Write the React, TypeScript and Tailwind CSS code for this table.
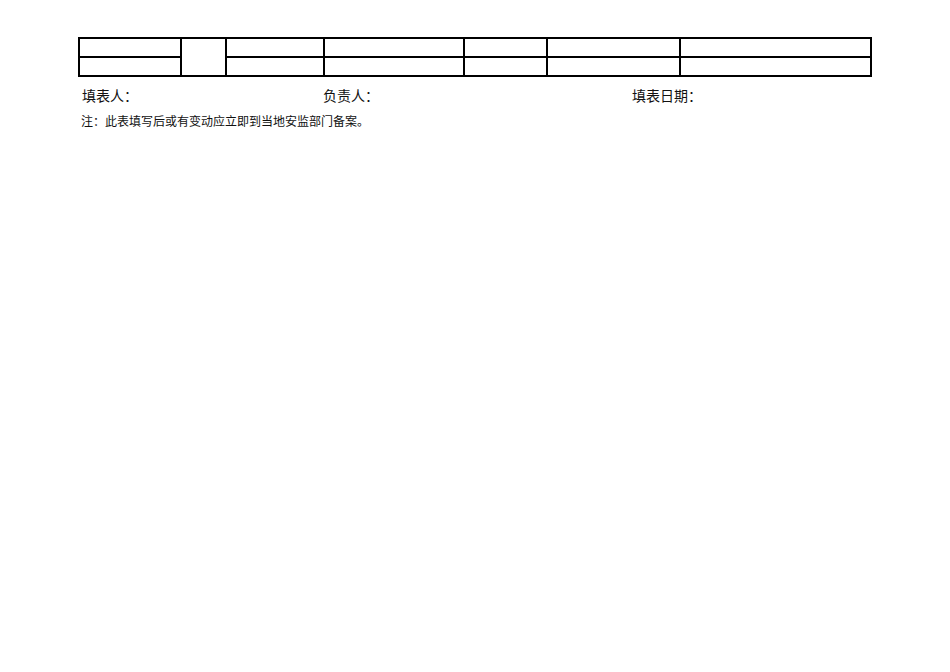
export default function App() {
  const font = { fontFamily: '"Noto Sans CJK SC", "Noto Sans", sans-serif' };
  const cols = [102, 45, 98, 140, 83, 133, 191];
  return (
    <div className="w-[950px] h-[672px] bg-white" style={font}>
      <div className="pl-[78px] pt-[37px]">
        <table className="table-fixed border-collapse w-[792px]">
          <colgroup>
            {cols.map((w, i) => (
              <col key={i} style={{ width: w }} />
            ))}
          </colgroup>
          <tbody>
            <tr className="h-[19px]">
              <td className="border-2 border-black p-0"></td>
              <td className="border-2 border-black p-0" rowSpan={2}></td>
              <td className="border-2 border-black p-0"></td>
              <td className="border-2 border-black p-0"></td>
              <td className="border-2 border-black p-0"></td>
              <td className="border-2 border-black p-0"></td>
              <td className="border-2 border-black p-0"></td>
            </tr>
            <tr className="h-[19px]">
              <td className="border-2 border-black p-0"></td>
              <td className="border-2 border-black p-0"></td>
              <td className="border-2 border-black p-0"></td>
              <td className="border-2 border-black p-0"></td>
              <td className="border-2 border-black p-0"></td>
              <td className="border-2 border-black p-0"></td>
            </tr>
          </tbody>
        </table>
        <div className="flex pl-[4px] mt-[8px] text-[14px] leading-[20px] text-[#111]">
          <div className="w-[241px]">填表人：</div>
          <div className="w-[309px]">负责人：</div>
          <div>填表日期：</div>
        </div>
        <div className="pl-[3px] mt-[8px] text-[12px] leading-[16px] text-[#111]">
          注：此表填写后或有变动应立即到当地安监部门备案。
        </div>
      </div>
    </div>
  );
}
